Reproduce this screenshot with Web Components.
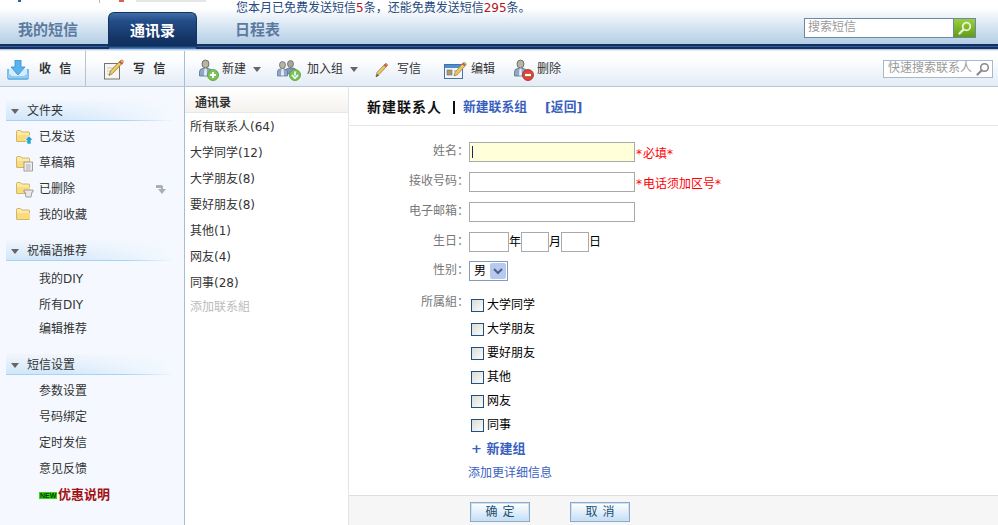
<!DOCTYPE html>
<html lang="zh">
<head>
<meta charset="utf-8">
<title>通讯录</title>
<style>
  html, body { margin: 0; height: 100%; overflow: hidden; background: #fff; }
  body { font: 12px/1.2 "DejaVu Sans", "Noto Sans CJK SC", sans-serif; color: #333; }
  sms-app { width: 998px; height: 525px; }
</style>
</head>
<body>
<sms-app></sms-app>
<script>
const ICONS = {
  user: (badge) => `<svg width="22" height="22" viewBox="0 0 22 22">
    <ellipse cx="7.500" cy="5" rx="3.500" ry="4" fill="#b9b3a4" stroke="#5a5a58" stroke-width=".8"/>
    <path d="M1.500 17v-4q0-3.500 3.500-3.500h5q3.500 0 3.500 3.500v4z" fill="#8fa8c8" stroke="#56708f" stroke-width=".8"/>
    <path d="M6.500 9.500h2l.5 7h-3z" fill="#e9eef4"/>${badge}</svg>`,
  users: (badge) => `<svg width="26" height="22" viewBox="0 0 26 22">
    <ellipse cx="14.500" cy="5" rx="3" ry="3.500" fill="#a9a79c" stroke="#5a5a58" stroke-width=".7"/>
    <path d="M10 15v-3q0-3 3-3h4q3 0 3 3v3z" fill="#7f97b8" stroke="#56708f" stroke-width=".7"/>
    <ellipse cx="6.500" cy="6" rx="3" ry="3.500" fill="#b9b3a4" stroke="#5a5a58" stroke-width=".7"/>
    <path d="M1.500 17v-4q0-3 3-3h4q3 0 3 3v4z" fill="#8fa8c8" stroke="#56708f" stroke-width=".7"/>
    <path d="M5.500 10h2l.5 6.500h-3z" fill="#e9eef4"/>${badge}</svg>`,
  plus: (x) => `<circle cx="${x}" cy="16" r="5.500" fill="#7cc35a" stroke="#4f9a35" stroke-width=".8"/>
    <path d="M${x - 3} 16h6M${x} 13v6" stroke="#fff" stroke-width="1.800"/>`,
  down: (x) => `<circle cx="${x}" cy="16" r="5.500" fill="#7cc35a" stroke="#4f9a35" stroke-width=".8"/>
    <path d="M${x} 12.500v4M${x - 3} 16l3 3.200 3-3.200" stroke="#fff" stroke-width="1.600" fill="none"/>`,
  cross: (x) => `<circle cx="${x}" cy="16" r="5.500" fill="#d8473a" stroke="#a52b22" stroke-width=".8"/>
    <path d="M${x - 3} 16h6" stroke="#fff" stroke-width="2.200"/>`,
  pencil: `<svg width="14" height="16" viewBox="0 0 14 16">
    <path d="M1 15l1-4.500L10 2q1-1 2 0t0 2l-8 8.500z" fill="#f0c95a" stroke="#8f7b45" stroke-width=".8"/>
    <path d="M9.500 2.500l2 2" stroke="#c9574a" stroke-width="2"/><path d="M1 15l1-3 2 1.500z" fill="#55504a"/></svg>`,
  edit: `<svg width="24" height="18" viewBox="0 0 24 18">
    <rect x=".5" y="3.500" width="18" height="14" fill="#f4f6fa" stroke="#4d6f9e"/>
    <rect x="1" y="4" width="17" height="3" fill="#4d8fd6"/>
    <rect x="3" y="9" width="5" height="5" fill="#b09a60" stroke="#5b6d8a" stroke-width=".6"/>
    <path d="M10 10h6M10 13h4" stroke="#8b9bb2"/>
    <path d="M10 15l1-3.500L19 2q1-1 2.500 0t0 2.500L13 14z" fill="#f0c95a" stroke="#8f7b45" stroke-width=".7"/>
    <path d="M18.500 2.500l2.500 2" stroke="#c9574a" stroke-width="2"/></svg>`,
  inbox: `<svg width="22" height="20" viewBox="0 0 22 20">
    <path d="M1 9v9q0 1 1 1h18q1 0 1-1V9" fill="#d5ecfb" stroke="#4fa5df" stroke-width="1.400"/>
    <path d="M1 13l4 3h12l4-3v5H1z" fill="#8fcbf3"/>
    <path d="M8 0h6v7h4l-7 8-7-8h4z" fill="#5cb2ea" stroke="#2f8fd0" stroke-width=".8"/></svg>`,
  compose: `<svg width="21" height="21" viewBox="0 0 21 21">
    <rect x=".5" y="4.500" width="15" height="15.500" fill="#f6f5f0" stroke="#77746c"/>
    <path d="M3 9h8M3 12h6M3 15h5" stroke="#c8c5bb"/>
    <path d="M5 16.500l1.500-4.500L16.500 1.500q1.200-1 2.300 0t0 2.300L8.500 14.500z" fill="#f2cb58" stroke="#8c7640" stroke-width=".8"/>
    <path d="M15.500 2.500l3 2.500" stroke="#c9574a" stroke-width="2.200"/></svg>`,
  folder: (extra = '') => `<svg width="18" height="18" viewBox="0 0 18 18">
    <path d="M.5 13V3.500q0-1 1-1h3l1.500 1.500h6.500q1 0 1 1V13q0 .5-.5.5H1q-.5 0-.5-.5z" fill="#fce9a5" stroke="#c9ad62" stroke-width=".9"/>
    <path d="M1 7h13v6H1z" fill="#fbdc7c"/>${extra}</svg>`,
  magnifier: (c, w) => `<svg width="14" height="14" viewBox="0 0 14 14">
    <circle cx="8.500" cy="5.500" r="3.800" fill="none" stroke="${c}" stroke-width="${w}"/>
    <path d="M5.500 8.500L1.500 12.500" stroke="${c}" stroke-width="${w + .6}" stroke-linecap="round"/></svg>`
};

// shared helper: open shadow root with given html
class Base extends HTMLElement {
  render(html) {
    if (!this.shadowRoot) this.attachShadow({ mode: 'open' });
    this.shadowRoot.innerHTML = html;
  }
}

class AppHeader extends Base {
  connectedCallback() {
    this.render(`<style>
      :host { display: block; height: 50px; position: relative;
        background: linear-gradient(#fff 0, #fff 8px, #e4eef7 20px, #b4cee5 44px); }
      .top { display: flex; height: 12px; }
      .crop { display: flex; width: 236px; height: 3px; flex: none; }
      .crop i { display: block; height: 2px; }
      .notice { color: #234a80; line-height: 16px; height: 16px; }
      .notice b { font-weight: normal; color: #b3151a; }
      .bar { display: flex; height: 32px; padding-left: 18px; }
      .tab { font-weight: bold; font-size: 15px; color: #5c7a9f; line-height: 37px; }
      .tab.on { width: 89px; height: 37px; margin: 0 38px 0 30px; box-sizing: border-box; text-align: center;
        color: #fff; line-height: 36px; border-radius: 6px 6px 0 0; position: relative; z-index: 1;
        border: 1px solid #16335f; border-bottom: 0;
        background: linear-gradient(#3f6ea8 0, #234d88 8px, #143466 26px, #10305f 33px, #4b8fd0 36px); }
      .search { display: flex; height: 20px; margin: 6px 22px 0 auto; }
      .search span { box-sizing: border-box; width: 150px; height: 20px; background: #fff; border: 1px solid #6f86a5;
        color: #9a9a9a; line-height: 16px; padding-left: 3px; }
      .search em { display: flex; align-items: center; justify-content: center; width: 22px; height: 20px; box-sizing: border-box;
        border: 1px solid #6f86a5; border-left: 0; background: linear-gradient(#9bd03f, #5f9e12); }
      .rule { position: absolute; left: 0; right: 0; top: 44px; height: 5px;
        background: linear-gradient(#16305f 0, #16305f 2px, #2d5f9e 2px, #2d5f9e 3px, #16305f 3px); }
    </style>
    <div class="top">
      <div class="crop">
        <i style="margin-left:18px;width:3px;background:#2b62b0"></i>
        <i style="margin-left:78px;width:1px;height:3px;background:#bbb"></i>
        <i style="margin-left:19px;width:5px;background:#d8604f"></i>
        <i style="margin-left:12px;width:70px;background:#e6e6e6"></i>
      </div>
      <div class="notice">您本月已免费发送短信<b>5</b>条，还能免费发送短信<b>295</b>条。</div>
    </div>
    <div class="bar">
      <div class="tab">我的短信</div>
      <div class="tab on">通讯录</div>
      <div class="tab">日程表</div>
      <div class="search"><span>搜索短信</span><em>${ICONS.magnifier('#e9f5d8', 1.8)}</em></div>
    </div>
    <div class="rule"></div>`);
  }
}

class ToolButton extends Base {
  connectedCallback() {
    const gap = +(this.getAttribute('gap') || 4);
    this.render(`<style>
      :host { display: flex; align-items: center; gap: ${gap}px; color: #333; white-space: nowrap; }
      i { display: block; width: 0; height: 0; margin-left: ${7 - gap}px; border: 4px solid transparent; border-top: 5px solid #666; border-bottom: 0; }
      svg { display: block; }
    </style><slot name="icon"></slot><slot></slot>${this.hasAttribute('menu') ? '<i></i>' : ''}`);
  }
}

class AppToolbar extends Base {
  connectedCallback() {
    this.render(`<style>
      :host { display: flex; height: 37px; box-sizing: border-box; border-top: 1px solid #e5e8ec; border-bottom: 1px solid #b6c7d8;
        background: linear-gradient(#fff 0, #fbfdff 30%, #e3ebf5 100%); }
      .mail { display: flex; width: 184px; flex: none; border-right: 1px solid #a9bcd3; }
      .mail div { display: flex; align-items: center; font-weight: bold; white-space: pre; color: #333; padding-top: 2px; box-sizing: border-box; }
      .in { width: 86px; padding-left: 7px; gap: 10px; border-right: 1px solid #b6c3d1; }
      .out { flex: 1; padding-left: 18px; gap: 8px; }
      .tools { flex: 1; display: flex; align-items: center; padding: 2px 0 0 13px; }
      .quick { margin: -2px 5px 0 auto; display: flex; align-items: center; gap: 4px; width: 110px; height: 18px; box-sizing: border-box;
        border: 1px solid #a8b9cc; background: #fff; color: #999; padding-left: 4px; }
      svg { display: block; }
    </style>
    <div class="mail">
      <div class="in">${ICONS.inbox}<span>收  信</span></div>
      <div class="out">${ICONS.compose}<span>写  信</span></div>
    </div>
    <div class="tools">
      <tool-button menu gap="2" style="margin-right:15px"><span slot="icon">${ICONS.user(ICONS.plus(15))}</span>新建</tool-button>
      <tool-button menu gap="5" style="margin-right:17px"><span slot="icon">${ICONS.users(ICONS.down(19))}</span>加入组</tool-button>
      <tool-button gap="8" style="margin-right:23px"><span slot="icon">${ICONS.pencil}</span>写信</tool-button>
      <tool-button gap="3" style="margin-right:18px"><span slot="icon">${ICONS.edit}</span>编辑</tool-button>
      <tool-button gap="2"><span slot="icon">${ICONS.user(ICONS.cross(15))}</span>删除</tool-button>
      <div class="quick"><span>快速搜索联系人</span>${ICONS.magnifier('#8a8a8a', 1.6)}</div>
    </div>`);
  }
}

class SideSection extends Base {
  connectedCallback() {
    this.render(`<style>
      :host { display: block; margin-top: 13px; }
      .head { display: flex; align-items: center; gap: 8px; height: 21px; box-sizing: border-box; margin: 0 9px 0 6px; padding: 2px 0 0 5px; color: #333;
        background:
          linear-gradient(90deg, #a9d3f2 70%, rgba(169,211,242,0)) bottom / 100% 1px no-repeat,
          linear-gradient(90deg, rgba(245,249,255,0) 30%, #f5f9ff),
          linear-gradient(#f2f6fc, #cfe6fa); }
      .head i { width: 0; height: 0; border: 4px solid transparent; border-top: 5px solid #666; border-bottom: 0; }
      .body { padding-top: var(--gap, 2px); }
    </style>
    <div class="head"><i></i>${this.getAttribute('title')}</div>
    <div class="body"><slot></slot></div>`);
  }
}

class SideItem extends Base {
  connectedCallback() {
    const icon = this.dataset.icon;
    this.render(`<style>
      :host { display: flex; align-items: center; height: 26px; box-sizing: border-box; padding: 2px 0 0 ${icon ? 16 : 39}px; color: #333; }
      .ic { width: 23px; height: 18px; flex: none; }
      .ic svg { display: block; }
      .mark { margin-left: auto; margin-right: 17px; }
    </style>${icon ? `<span class="ic">${AppSidebar.folders[icon]}</span>` : ''}<slot></slot><span class="mark"><slot name="mark"></slot></span>`);
  }
}

class AppSidebar extends Base {
  static folders = {
    sent: ICONS.folder('<path d="M13 8l4 4h-2v4h-4v-4H9z" fill="#27a4d8" stroke="#fff" stroke-width=".5"/>'),
    draft: ICONS.folder('<rect x="8" y="8" width="8.500" height="9" fill="#eee" stroke="#8a8a8a" stroke-width=".8"/><path d="M10 11h4.500M10 13h4.500M10 15h4.500" stroke="#999" stroke-width=".8"/>'),
    trash: ICONS.folder('<path d="M8 10h9v2h-1l-1 5H10l-1-5H8z" fill="#e8e8e8" stroke="#8a8a8a" stroke-width=".8"/>'),
    fav: ICONS.folder()
  };
  connectedCallback() {
    this.render(`<style>
      :host { display: block; width: 185px; flex: none; box-sizing: border-box; border-right: 1px solid #a9bcd3; background: #f5f9ff; overflow: hidden; }
      .new { display: inline-block; font: bold 7px/7px "Liberation Sans", sans-serif; background: #35d60f; color: #04350a; padding: 0 1px; width: 16px; }
      .promo { font-weight: bold; font-size: 13px; color: #a31111; display: flex; align-items: center; gap: 1px; }
      svg { display: block; }
    </style>
    <side-section title="文件夹">
      <side-item data-icon="sent">已发送</side-item>
      <side-item data-icon="draft">草稿箱</side-item>
      <side-item data-icon="trash">已删除<svg slot="mark" width="12" height="12" viewBox="0 0 12 12"><path d="M1 2h5q2 0 2 2v2h3l-4 5-4-5h3V5H1z" fill="#a8b0b4"/></svg></side-item>
      <side-item data-icon="fav">我的收藏</side-item>
    </side-section>
    <side-section title="祝福语推荐" style="--gap:4px">
      <side-item>我的DIY</side-item>
      <side-item>所有DIY</side-item>
      <side-item style="margin-top:-2px">编辑推荐</side-item>
    </side-section>
    <side-section title="短信设置">
      <side-item>参数设置</side-item>
      <side-item>号码绑定</side-item>
      <side-item>定时发信</side-item>
      <side-item>意见反馈</side-item>
      <side-item><span class="promo"><span class="new">NEW</span>优惠说明</span></side-item>
    </side-section>`);
  }
}

class GroupList extends Base {
  connectedCallback() {
    const rows = ['所有联系人(64)', '大学同学(12)', '大学朋友(8)', '要好朋友(8)', '其他(1)', '网友(4)', '同事(28)'];
    this.render(`<style>
      :host { display: block; width: 164px; flex: none; box-sizing: border-box; border-right: 1px solid #dfe5ec; background: #fff; }
      h2 { margin: 0; height: 26px; box-sizing: border-box; padding: 9px 0 0 10px; font-size: 12px; line-height: 14px; font-weight: bold; color: #333;
        border-bottom: 1px solid #e8e8e8; background: linear-gradient(#fff, #f5f3ee); }
      div { height: 26px; box-sizing: border-box; padding: 2px 0 0 5px; line-height: 24px; color: #333; }
      .add { color: #bcbcbc; height: 22px; line-height: 20px; }
    </style>
    <h2>通讯录</h2>
    ${rows.map(r => `<div>${r}</div>`).join('')}
    <div class="add">添加联系組</div>`);
  }
}

class FormRow extends Base {
  connectedCallback() {
    this.render(`<style>
      :host { display: flex; margin-bottom: var(--after, 10px); }
      label { width: 120px; flex: none; text-align: right; color: #777; line-height: 18px; white-space: nowrap; }
      .f { display: flex; align-items: center; line-height: 20px; color: #000; padding-top: var(--drop, 0); }
    </style><label>${this.getAttribute('label')}：</label><div class="f"><slot></slot></div>`);
  }
}

class CheckRow extends Base {
  connectedCallback() {
    this.render(`<style>
      :host { display: flex; align-items: center; gap: 3px; height: 24px; padding-left: 2px; color: #000; }
      i { display: block; width: 13px; height: 13px; box-sizing: border-box; border: 1px solid #1f4f80;
        background: linear-gradient(135deg, #dcdcd6, #fbfbf9); }
    </style><i></i><slot></slot>`);
  }
}

class ContactForm extends Base {
  connectedCallback() {
    this.render(`<style>
      :host { display: flex; flex-direction: column; flex: 1; min-width: 0; background: #fff; }
      .title { height: 39px; box-sizing: border-box; border-bottom: 1px solid #e6e6e6; display: flex; align-items: center; padding: 2px 0 0 18px; color: #3a5fbf; font-weight: bold; white-space: nowrap; }
      .title h1 { margin: 0 8px 0 0; font-size: 14px; letter-spacing: 1px; color: #111; }
      .title u { text-decoration: none; display: block; width: 2px; height: 13px; background: #111; margin: 0 8px 0 3px; }
      .title a { font-size: 12.800px; margin-right: 18px; }
      form { flex: 1; margin: 0; padding-top: 16px; }
      input { display: block; box-sizing: border-box; height: 20px; margin: 0; padding: 0; border: 1px solid #aaa; background: #fff; outline: 0; }
      .caret { position: relative; }
      .caret input { background: #ffffd9; }
      .caret::after { content: ""; position: absolute; left: 3px; top: 4px; width: 1px; height: 12px; background: #1a2a55; }
      .req { color: #f00; white-space: nowrap; padding: 3px 0 0 1px; line-height: 18px; height: 20px; box-sizing: border-box; }
      .req s { text-decoration: none; letter-spacing: 1px; }
      .sel { display: flex; align-items: center; justify-content: space-between; width: 39px; height: 20px; box-sizing: border-box; border: 1px solid #7f9db9; padding: 0 1px 0 4px; color: #000; }
      .sel svg { display: block; }
      .link { color: #3a5fbf; margin-left: 119px; }
      .more { font-weight: bold; font-size: 13px; height: 25px; line-height: 24px; padding-left: 3px; }
      .detail { line-height: 22px; }
      .foot { height: 30px; box-sizing: border-box; border-top: 1px solid #dedede; background: #f6f6f6; display: flex; gap: 40px; padding: 6px 0 0 121px; }
      .foot button { width: 60px; height: 20px; box-sizing: border-box; padding: 0; border: 1px solid #8caac8; box-shadow: inset 0 0 0 1px #cfe2f3;
        background: linear-gradient(#fff, #c3def6); color: #1d4f73; font: inherit; white-space: pre; word-spacing: 1px; }
    </style>
    <div class="title"><h1>新建联系人</h1><u></u><a>新建联系组</a><a>[返回]</a></div>
    <form>
      <form-row label="姓名"><span class="caret"><input style="width:166px"></span><span class="req"><s>*</s>必填<s>*</s></span></form-row>
      <form-row label="接收号码"><input style="width:166px"><span class="req"><s>*</s>电话须加区号<s>*</s></span></form-row>
      <form-row label="电子邮箱"><input style="width:166px"></form-row>
      <form-row label="生日" style="--after:9px"><input style="width:40px">年<input style="width:28px">月<input style="width:28px">日</form-row>
      <form-row label="性别" style="--after:12px"><div class="sel">男<svg width="16" height="16" viewBox="0 0 16 16"><rect width="16" height="16" rx="2" fill="#b7c9ef"/><path d="M4 6l4 4 4-4" fill="none" stroke="#4d6185" stroke-width="2"/></svg></div></form-row>
      <form-row label="所属組" style="--after:0">
        <div>
          <check-row>大学同学</check-row>
          <check-row>大学朋友</check-row>
          <check-row>要好朋友</check-row>
          <check-row>其他</check-row>
          <check-row>网友</check-row>
          <check-row>同事</check-row>
        </div>
      </form-row>
      <div class="link more">+ 新建组</div>
      <div class="link detail">添加更详细信息</div>
    </form>
    <div class="foot"><button type="button">确 定</button><button type="button">取 消</button></div>`);
  }
}

class SmsApp extends Base {
  connectedCallback() {
    this.render(`<style>
      :host { display: flex; flex-direction: column; overflow: hidden; }
      main { flex: 1; display: flex; min-height: 0; }
    </style>
    <app-header></app-header>
    <app-toolbar></app-toolbar>
    <main>
      <app-sidebar></app-sidebar>
      <group-list></group-list>
      <contact-form></contact-form>
    </main>`);
  }
}

customElements.define('tool-button', ToolButton);
customElements.define('side-section', SideSection);
customElements.define('side-item', SideItem);
customElements.define('form-row', FormRow);
customElements.define('check-row', CheckRow);
customElements.define('app-header', AppHeader);
customElements.define('app-toolbar', AppToolbar);
customElements.define('app-sidebar', AppSidebar);
customElements.define('group-list', GroupList);
customElements.define('contact-form', ContactForm);
customElements.define('sms-app', SmsApp);
</script>
</body>
</html>
